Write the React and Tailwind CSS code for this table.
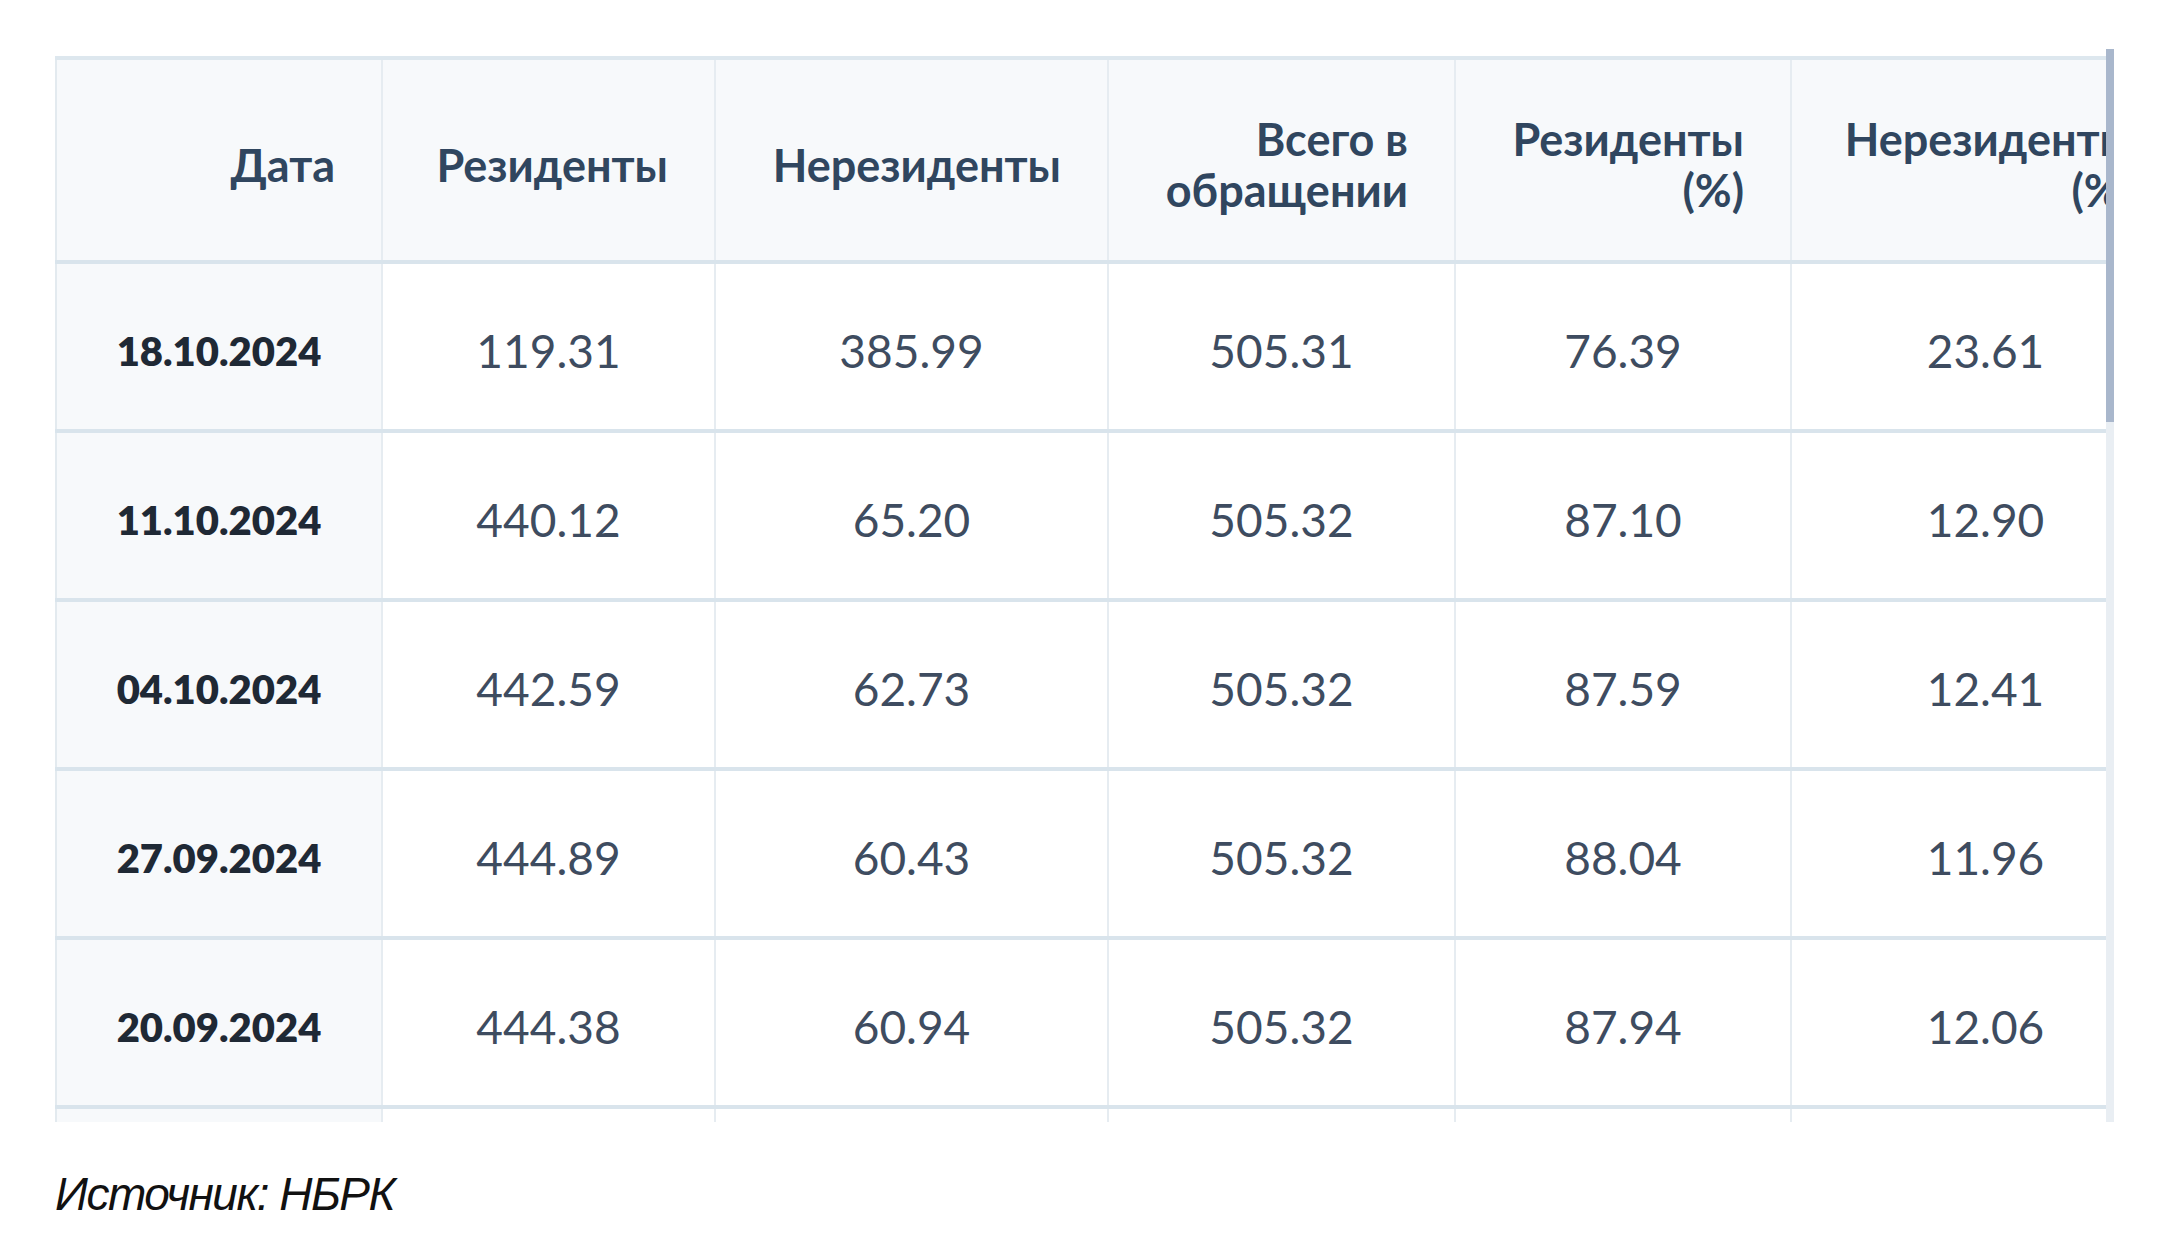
const rows = [
  ["18.10.2024", "119.31", "385.99", "505.31", "76.39", "23.61"],
  ["11.10.2024", "440.12", "65.20", "505.32", "87.10", "12.90"],
  ["04.10.2024", "442.59", "62.73", "505.32", "87.59", "12.41"],
  ["27.09.2024", "444.89", "60.43", "505.32", "88.04", "11.96"],
  ["20.09.2024", "444.38", "60.94", "505.32", "87.94", "12.06"],
];

const headers = ["Дата", "Резиденты", "Нерезиденты", "Всего в обращении", "Резиденты (%)", "Нерезиденты (%)"];

const App = () => {
  return (
    <div className="min-h-screen bg-white pt-[56px] pl-[55px] font-['Lato',sans-serif]">
      <div className="relative flex h-[1066px] w-[2059px]">
        {/* table area, clipped like a scroll box */}
        <div className="h-full w-[2051px] overflow-hidden">
          <table className="w-[2124px] table-fixed border-collapse border-t-4 border-l-2 border-t-[#dde7ee] border-l-[#e3eaef]">
            <colgroup>
              <col className="w-[326px]" />
              <col className="w-[333px]" />
              <col className="w-[393px]" />
              <col className="w-[347px]" />
              <col className="w-[336px]" />
              <col className="w-[389px]" />
            </colgroup>
            <thead>
              <tr className="h-[204px] bg-[#f7f9fb]">
                {headers.map((h, i) => (
                  <th
                    key={i}
                    className="border-r-2 border-b-4 border-r-[#e6ecf1] border-b-[#d9e4ec] px-[46px] pt-[10px] text-right align-middle text-[45px] leading-[51px] font-bold text-[#30465f]"
                  >
                    {h}
                  </th>
                ))}
              </tr>
            </thead>
            <tbody>
              {rows.map((r) => (
                <tr key={r[0]} className="h-[169px]">
                  {r.map((v, i) => (
                    <td
                      key={i}
                      className={
                        i === 0
                          ? "border-r-2 border-b-4 border-r-[#e6ecf1] border-b-[#d9e4ec] bg-[#f7f9fb] pt-[8px] text-center align-middle text-[40px] font-extrabold text-[#1f2935]"
                          : "border-r-2 border-b-4 border-r-[#e6ecf1] border-b-[#d9e4ec] bg-white pt-[8px] text-center align-middle text-[46px] text-[#3e4c60]"
                      }
                    >
                      {v}
                    </td>
                  ))}
                </tr>
              ))}
              {/* next row, only its top edge shows above the fold */}
              <tr className="h-[169px]">
                {headers.map((h, i) => (
                  <td
                    key={i}
                    className={
                      i === 0
                        ? "border-r-2 border-r-[#e6ecf1] bg-[#f7f9fb]"
                        : "border-r-2 border-r-[#e6ecf1] bg-white"
                    }
                  />
                ))}
              </tr>
            </tbody>
          </table>
        </div>
        {/* scrollbar */}
        <div className="relative h-full w-[8px] bg-[#e9eef3]">
          <div className="absolute left-0 top-[-7px] h-[373px] w-[8px] bg-[#a9b7cc]" />
        </div>
      </div>
      <p className="mt-[38px] text-[46px] italic tracking-[-1.5px] text-[#111] font-['Liberation_Sans',sans-serif]">
        Источник: НБРК
      </p>
    </div>
  );
};

export default App;
